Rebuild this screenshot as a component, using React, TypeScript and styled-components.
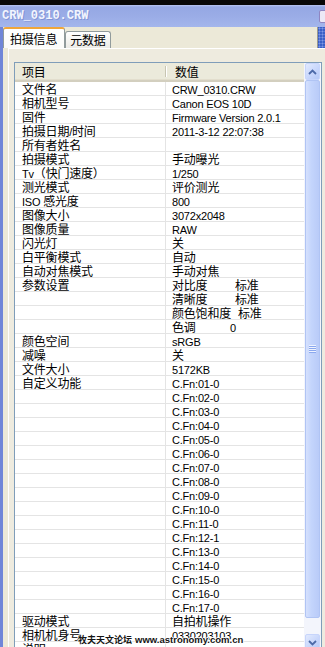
import React from "react";
import styled, { createGlobalStyle } from "styled-components";

const GlobalStyle = createGlobalStyle`
  html, body { margin: 0; padding: 0; background: #ece9d8; overflow: hidden; }
  #root { width: 325px; height: 647px; overflow: hidden; }
`;

const Screen = styled.div`
  position: relative;
  width: 325px;
  height: 647px;
  overflow: hidden;
  display: flex;
  flex-direction: column;
  background: #ece9d8;
  font-family: "Noto Sans CJK SC", sans-serif;
  color: #000;
`;

const TopEdge = styled.div`
  flex: none;
  height: 5px;
  background: #070707;
`;

const TitleBar = styled.div`
  flex: none;
  height: 22px;
  display: flex;
  align-items: center;
  padding-left: 2px;
  background: linear-gradient(#b8c5f1 0px, #95a8e4 2px, #9aace6 50%, #a4b6ec 100%);
`;

const TitleText = styled.span`
  font-family: "Liberation Mono", monospace;
  font-weight: bold;
  font-size: 12px;
  line-height: 18px;
  color: #f2f5fe;
  text-shadow: 1px 1px 0 rgba(80, 100, 180, 0.35);
`;

const CloseBox = styled.div`
  margin-left: auto;
  margin-right: -13px;
  width: 17px;
  height: 11px;
  border: 1px solid #8f86c2;
  border-radius: 2px;
  background: #ece9f6;
`;

const Frame = styled.div`
  flex: 1;
  min-height: 0;
  display: flex;
  flex-direction: column;
  border-left: 3px solid #7086d8;
`;

const TabStrip = styled.div`
  flex: none;
  height: 21px;
  display: flex;
  align-items: flex-end;
`;

const Tab = styled.div<{ $active?: boolean }>`
  box-sizing: border-box;
  height: ${(p) => (p.$active ? 21 : 17)}px;
  padding: 0 ${(p) => (p.$active ? "7px 0 6px" : "4px")};
  display: flex;
  align-items: center;
  font-size: 12px;
  letter-spacing: -0.2px;
  line-height: 14px;
  border: 1px solid #919b9c;
  border-bottom: none;
  border-top: ${(p) => (p.$active ? "2px solid #f0a63a" : "1px solid #919b9c")};
  border-radius: 3px 3px 0 0;
  background: ${(p) =>
    p.$active ? "linear-gradient(#ffffff, #fbfbf9)" : "linear-gradient(#ffffff, #ecebe6)"};
`;

const EdgeGadget = styled.div`
  margin-left: auto;
  align-self: stretch;
  width: 8px;
  box-sizing: border-box;
  border-left: 1px solid #9c9a8c;
  background-color: #3a5fc6;
  background-image: radial-gradient(circle, #7d98e6 0.8px, transparent 1.2px);
  background-size: 3px 3px;
`;

const Panel = styled.div`
  flex: none;
  height: 620px;
  margin-left: 5px;
  border-top: 1px solid #fff;
  border-left: 1px solid #fff;
  padding: 13px 0 0 5px;
  background: #eeebdf;
`;

const ListView = styled.div`
  box-sizing: border-box;
  width: 308px;
  height: 590px;
  border: 1px solid #7f9db9;
  background: #fff;
  display: flex;
`;

const Table = styled.div`
  flex: 1;
  min-width: 0;
  overflow: hidden;
  display: flex;
  flex-direction: column;
`;

const HeaderRow = styled.div`
  flex: none;
  box-sizing: border-box;
  height: 19px;
  display: flex;
  background: #ebeadb;
  border-bottom: 2px solid #d3cfbf;
  box-shadow: inset 0 -1px 0 #e2decd;
`;

const HeaderCell = styled.div<{ $w?: number; $divider?: boolean }>`
  position: relative;
  box-sizing: border-box;
  width: ${(p) => (p.$w ? `${p.$w}px` : "auto")};
  flex: ${(p) => (p.$w ? "none" : "1")};
  padding-left: ${(p) => (p.$divider ? 7 : 9)}px;
  font-size: 12px;
  letter-spacing: -0.2px;
  line-height: 17px;
  white-space: nowrap;
  &::after {
    content: "";
    display: ${(p) => (p.$divider ? "block" : "none")};
    position: absolute;
    right: 0;
    top: 3px;
    bottom: 3px;
    width: 1px;
    background: #c7c5b2;
    box-shadow: 1px 0 0 #fff;
  }
`;

const Row = styled.div`
  flex: none;
  box-sizing: border-box;
  height: 14px;
  display: flex;
  border-bottom: 1px solid #e4e4e4;
`;

const Cell = styled.div<{ $w?: number }>`
  box-sizing: border-box;
  width: ${(p) => (p.$w ? `${p.$w}px` : "auto")};
  flex: ${(p) => (p.$w ? "none" : "1")};
  padding-left: ${(p) => (p.$w ? 7 : 6)}px;
  border-right: ${(p) => (p.$w ? "1px solid #e4e4e4" : "none")};
  font-size: 12px;
  letter-spacing: -0.2px;
  line-height: 13px;
  white-space: nowrap;
`;

const Key = styled.span<{ $w: number }>`
  display: inline-block;
  width: ${(p) => p.$w}px;
`;

const Latin = styled.span`
  font-family: "Liberation Sans", Arial, sans-serif;
  font-size: 11px;
`;

const ScrollBar = styled.div`
  flex: none;
  width: 17px;
  display: flex;
  flex-direction: column;
  background: #f3f5fc;
`;

const ScrollButton = styled.div`
  flex: none;
  box-sizing: border-box;
  height: 17px;
  margin: 0 1px 0 1px;
  border: 1px solid #c7d5fb;
  border-radius: 2px;
  background: linear-gradient(135deg, #e2eafe 0%, #c6d5fb 60%, #b6c9f6 100%);
  display: flex;
  align-items: center;
  justify-content: center;
`;

const Thumb = styled.div<{ $h: number }>`
  flex: none;
  box-sizing: border-box;
  height: ${(p) => p.$h}px;
  margin: 0 1px;
  border: 1px solid #b0c4f4;
  border-radius: 2px;
  background: linear-gradient(90deg, #d6e1fd 0%, #c4d5fc 40%, #b9cbf8 100%);
  display: flex;
  align-items: center;
  justify-content: center;
`;

const TrackRest = styled.div`
  flex: 1;
`;

const Grip = styled.div`
  width: 7px;
  height: 8px;
  background: repeating-linear-gradient(#eef3ff 0 1px, #8ba8ee 1px 2px);
`;

const Watermark = styled.div`
  position: absolute;
  left: 78px;
  top: 634px;
  display: flex;
  align-items: baseline;
  gap: 3px;
  font-weight: bold;
  color: #141414;
  white-space: nowrap;
  line-height: 12px;
  text-shadow: 1px 0 0 #fff, -1px 0 0 #fff, 0 1px 0 #fff, 0 -1px 0 #fff;
`;

const WmCn = styled.span`
  font-family: "Noto Sans CJK SC", sans-serif;
  font-size: 9px;
`;

const WmEn = styled.span`
  font-family: "Liberation Sans", Arial, sans-serif;
  font-size: 9.5px;
`;

function T({ s }: { s: string }) {
  const parts = s.match(/[\x00-\x7f]+|[^\x00-\x7f]+/g) || [];
  return (
    <>
      {parts.map((p, i) =>
        /^[\x00-\x7f]+$/.test(p) ? <Latin key={i}>{p}</Latin> : <React.Fragment key={i}>{p}</React.Fragment>
      )}
    </>
  );
}

type Item = { label?: string; value?: string; pair?: [string, string, number] };

const cfn: Item[] = Array.from({ length: 17 }, (_, i) => {
  const n = String(i + 1).padStart(2, "0");
  return { label: i === 0 ? "自定义功能" : "", value: `C.Fn:${n}-${i === 11 ? 1 : 0}` };
});

const items: Item[] = [
  { label: "文件名", value: "CRW_0310.CRW" },
  { label: "相机型号", value: "Canon EOS 10D" },
  { label: "固件", value: "Firmware Version 2.0.1" },
  { label: "拍摄日期/时间", value: "2011-3-12 22:07:38" },
  { label: "所有者姓名", value: "" },
  { label: "拍摄模式", value: "手动曝光" },
  { label: "Tv（快门速度）", value: "1/250" },
  { label: "测光模式", value: "评价测光" },
  { label: "ISO 感光度", value: "800" },
  { label: "图像大小", value: "3072x2048" },
  { label: "图像质量", value: "RAW" },
  { label: "闪光灯", value: "关" },
  { label: "白平衡模式", value: "自动" },
  { label: "自动对焦模式", value: "手动对焦" },
  { label: "参数设置", pair: ["对比度", "标准", 63] },
  { label: "", pair: ["清晰度", "标准", 63] },
  { label: "", pair: ["颜色饱和度", "标准", 66] },
  { label: "", pair: ["色调", "0", 58] },
  { label: "颜色空间", value: "sRGB" },
  { label: "减噪", value: "关" },
  { label: "文件大小", value: "5172KB" },
  ...cfn,
  { label: "驱动模式", value: "自拍机操作" },
  { label: "相机机身号", value: "0330203103" },
  { label: "说明", value: "" },
];

const Chevron = ({ up }: { up?: boolean }) => (
  <svg width="9" height="6" viewBox="0 0 9 6">
    <path
      d={up ? "M1 5 L4.5 1.5 L8 5" : "M1 1 L4.5 4.5 L8 1"}
      fill="none"
      stroke="#4d6aa8"
      strokeWidth="1.8"
    />
  </svg>
);

export default function App() {
  return (
    <Screen>
      <GlobalStyle />
      <TopEdge />
      <TitleBar>
        <TitleText>CRW_0310.CRW</TitleText>
        <CloseBox />
      </TitleBar>
      <Frame>
        <TabStrip>
          <Tab $active>拍摄信息</Tab>
          <Tab>元数据</Tab>
          <EdgeGadget />
        </TabStrip>
        <Panel>
          <ListView>
            <Table>
              <HeaderRow>
                <HeaderCell $w={151} $divider>项目</HeaderCell>
                <HeaderCell>数值</HeaderCell>
              </HeaderRow>
              {items.map((it, i) => (
                <Row key={i}>
                  <Cell $w={151}>
                    <T s={it.label || ""} />
                  </Cell>
                  <Cell>
                    {it.pair ? (
                      <>
                        <Key $w={it.pair[2]}>
                          <T s={it.pair[0]} />
                        </Key>
                        <T s={it.pair[1]} />
                      </>
                    ) : (
                      <T s={it.value || ""} />
                    )}
                  </Cell>
                </Row>
              ))}
            </Table>
            <ScrollBar>
              <ScrollButton>
                <Chevron up />
              </ScrollButton>
              <Thumb $h={538}>
                <Grip />
              </Thumb>
              <TrackRest />
              <ScrollButton>
                <Chevron />
              </ScrollButton>
            </ScrollBar>
          </ListView>
        </Panel>
      </Frame>
      <Watermark>
        <WmCn>牧夫天文论坛</WmCn>
        <WmEn>www.astronomy.com.cn</WmEn>
      </Watermark>
    </Screen>
  );
}
